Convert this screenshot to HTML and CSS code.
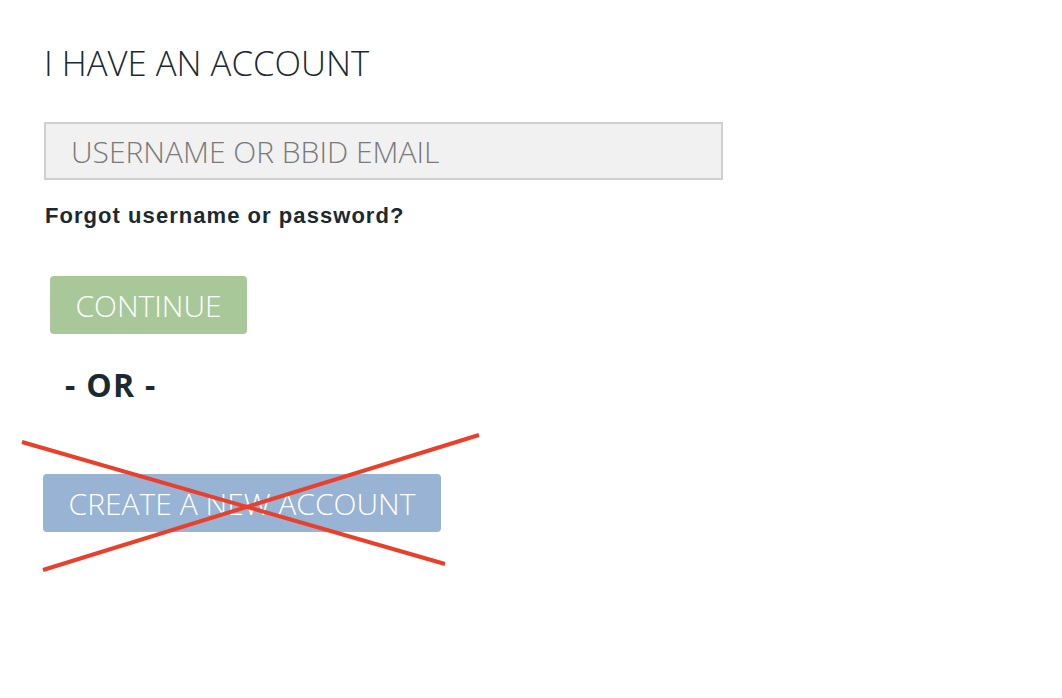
FILE: index.html
```html
<!DOCTYPE html>
<html>
<head>
<meta charset="utf-8">
<link rel="stylesheet" href="styles.css">
</head>
<body>
<main class="login">
  <h1 class="title">I HAVE AN ACCOUNT</h1>
  <input class="field" type="text" placeholder="USERNAME OR BBID EMAIL">
  <a class="forgot" href="#">Forgot username or password?</a>
  <button class="btn btn-continue">CONTINUE</button>
  <div class="or">- OR -</div>
  <div class="create-wrap">
    <button class="btn btn-create">CREATE A NEW ACCOUNT</button>
    <svg class="cross" width="1062" height="698" viewBox="0 0 1062 698">
      <line x1="22" y1="442" x2="445" y2="564" stroke="#e8402a" stroke-width="4"/>
      <line x1="43" y1="570" x2="479" y2="435" stroke="#e8402a" stroke-width="4"/>
    </svg>
  </div>
</main>
</body>
</html>
```
FILE: styles.css
```css
html, body {
  margin: 0;
  padding: 0;
  background: #fff;
}
body {
  font-family: "Open Sans", sans-serif;
  color: #1c2a30;
  width: 1062px;
  height: 698px;
  overflow: hidden;
  position: relative;
}
.login {
  padding: 38px 0 0 44px;
  display: flex;
  flex-direction: column;
  align-items: flex-start;
}
.title {
  margin: 0;
  font-weight: 300;
  font-size: 34.7px;
  line-height: 50px;
  color: #1c2a30;
  letter-spacing: 0;
}
.field {
  margin-top: 34px;
  width: 679px;
  height: 58px;
  box-sizing: border-box;
  border: 2px solid #cfcfcf;
  background: #f1f1f1;
  padding: 0 0 0 25px;
  font-family: "Open Sans", sans-serif;
  font-weight: 300;
  font-size: 30px;
  color: #777;
  outline: none;
}
.field::placeholder {
  color: #7a7a7a;
  opacity: 1;
}
.forgot {
  margin-top: 24px;
  margin-left: 1px;
  font-family: "Liberation Sans", Arial, sans-serif;
  font-weight: bold;
  font-size: 22px;
  letter-spacing: 1.05px;
  line-height: 24px;
  color: #1c2a30;
  text-decoration: none;
}
.btn {
  border: none;
  border-radius: 4px;
  height: 58px;
  color: #fff;
  font-family: "Open Sans", sans-serif;
  font-weight: 300;
  font-size: 30px;
  padding: 0;
  white-space: nowrap;
  cursor: pointer;
}
.btn-continue {
  margin-top: 48px;
  margin-left: 6px;
  width: 197px;
  background: #a8c89a;
}
.or {
  margin-top: 26px;
  margin-left: 21px;
  font-weight: 700;
  font-size: 32px;
  letter-spacing: 1.3px;
  line-height: 50px;
  color: #1c2a30;
}
.create-wrap {
  margin-top: 64px;
}
.btn-create {
  width: 398px;
  margin-left: -1px;
  background: #98b3d3;
}
.cross {
  position: absolute;
  left: 0;
  top: 0;
  pointer-events: none;
}
```
